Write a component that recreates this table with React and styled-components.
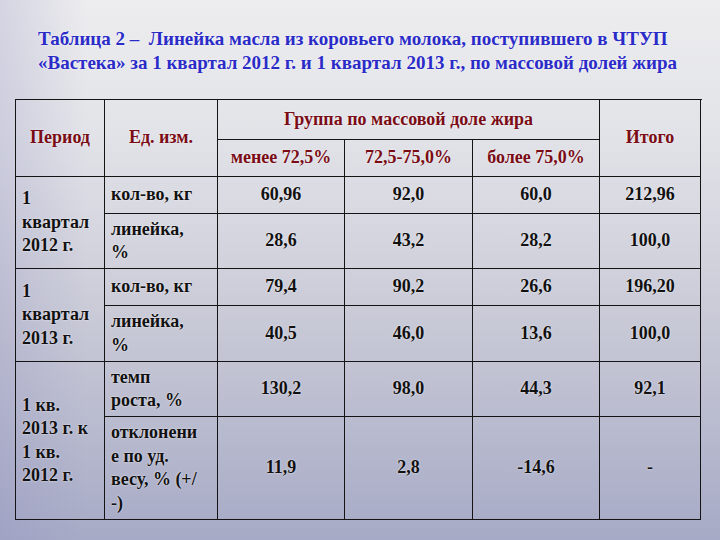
import React from "react";
import styled, { createGlobalStyle } from "styled-components";

const Global = createGlobalStyle`
  html, body {
    margin: 0;
    padding: 0;
  }
  body {
    background: linear-gradient(180deg, #ededef 0%, #e2e3e8 25%, #c8c9d6 60%, #a7aac6 100%);
  }
`;

const Page = styled.div`
  width: 720px;
  height: 540px;
  padding: 27px 0 0 15px;
  box-sizing: border-box;
  overflow: hidden;
  font-family: "Liberation Serif", "Times New Roman", serif;
  background: linear-gradient(90deg, rgba(140, 140, 190, 0.25) 0%, rgba(255, 255, 255, 0) 12%);
`;

const Title = styled.div`
  margin-left: 23px;
  width: 640px;
  height: 72px;
  font-family: "Liberation Serif", "Times New Roman", serif;
  font-size: 19px;
  line-height: 23.5px;
  font-weight: 700;
  color: #2b2bc8;
  text-shadow: 0 0 2px rgba(255, 255, 255, 0.9);
`;

const Grid = styled.div`
  display: grid;
  grid-template-columns: 89px 113px 127px 128px 127px 101px;
  grid-template-rows: 40px 37px 37px 55px 37px 56px 55px 103px;
  width: 686px;
  border-top: 1px solid #141414;
  border-left: 1px solid #141414;
  font-family: "Liberation Serif", "Times New Roman", serif;
  font-size: 18px;
  font-weight: 700;
  color: #111;
`;

const Cell = styled.div`
  display: flex;
  align-items: center;
  justify-content: ${(p) => (p.$left ? "flex-start" : "center")};
  padding-left: ${(p) => (p.$left ? 6 : 0)}px;
  grid-row: ${(p) => (p.$rows ? `span ${p.$rows}` : "auto")};
  grid-column: ${(p) => (p.$cols ? `span ${p.$cols}` : "auto")};
  border-right: 1px solid #141414;
  border-bottom: 1px solid #141414;
  box-sizing: border-box;
  font-family: "Liberation Serif", "Times New Roman", serif;
  line-height: 23.5px;
  text-align: ${(p) => (p.$left ? "left" : "center")};
  text-shadow: 0 0 2px rgba(255, 255, 255, 0.85);
`;

const Head = styled(Cell)`
  color: #7a0c16;
  justify-content: center;
  text-align: center;
`;

const Text = styled.div`
  font-family: "Liberation Serif", "Times New Roman", serif;
`;

const rows = [
  {
    period: ["1", "квартал", "2012 г."],
    items: [
      { unit: ["кол-во, кг"], vals: ["60,96", "92,0", "60,0", "212,96"] },
      { unit: ["линейка,", "%"], vals: ["28,6", "43,2", "28,2", "100,0"] },
    ],
  },
  {
    period: ["1", "квартал", "2013 г."],
    items: [
      { unit: ["кол-во, кг"], vals: ["79,4", "90,2", "26,6", "196,20"] },
      { unit: ["линейка,", "%"], vals: ["40,5", "46,0", "13,6", "100,0"] },
    ],
  },
  {
    period: ["1 кв.", "2013 г. к", "1 кв.", "2012 г."],
    items: [
      { unit: ["темп", "роста, %"], vals: ["130,2", "98,0", "44,3", "92,1"] },
      { unit: ["отклонени", "е по уд.", "весу, % (+/", "-)"], vals: ["11,9", "2,8", "-14,6", "-"] },
    ],
  },
];

const Lines = ({ lines }) => (
  <Text>
    {lines.map((l, i) => (
      <React.Fragment key={i}>
        {i > 0 && <br />}
        {l}
      </React.Fragment>
    ))}
  </Text>
);

export default function App() {
  return (
    <>
      <Global />
      <Page>
        <Title>
          Таблица 2 –&nbsp; Линейка масла из коровьего молока, поступившего в ЧТУП «Вастека» за 1 квартал 2012 г. и 1 квартал 2013 г., по массовой долей жира
        </Title>
        <Grid>
          <Head $rows={2}><Text>Период</Text></Head>
          <Head $rows={2}><Text>Ед. изм.</Text></Head>
          <Head $cols={3}><Text>Группа по массовой доле жира</Text></Head>
          <Head $rows={2}><Text>Итого</Text></Head>
          <Head><Text>менее 72,5%</Text></Head>
          <Head><Text>72,5-75,0%</Text></Head>
          <Head><Text>более 75,0%</Text></Head>
          {rows.map((g, gi) =>
            g.items.map((it, ii) => (
              <React.Fragment key={`${gi}-${ii}`}>
                {ii === 0 && (
                  <Cell $left $rows={g.items.length}>
                    <Lines lines={g.period} />
                  </Cell>
                )}
                <Cell $left>
                  <Lines lines={it.unit} />
                </Cell>
                {it.vals.map((v, vi) => (
                  <Cell key={vi}>
                    <Text>{v}</Text>
                  </Cell>
                ))}
              </React.Fragment>
            ))
          )}
        </Grid>
      </Page>
    </>
  );
}
